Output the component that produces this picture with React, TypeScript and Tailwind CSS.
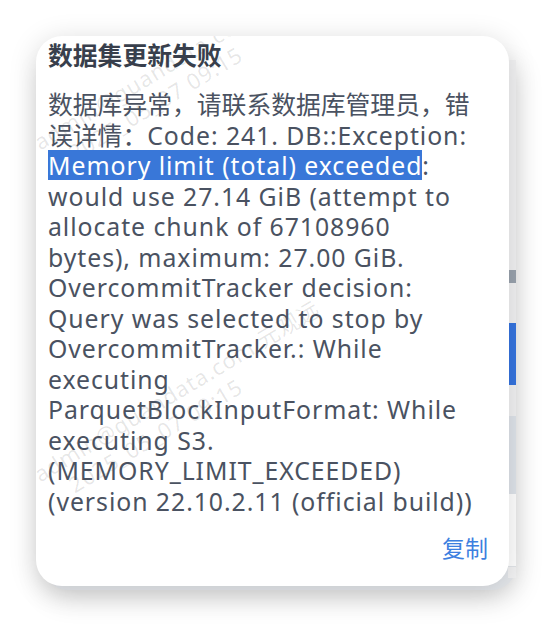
import React from "react";

const font = { fontFamily: '"Noto Sans", "Noto Sans CJK SC", sans-serif' };

function Watermark({ className }: { className: string }) {
  return (
    <div
      className={`pointer-events-none absolute origin-top-left -rotate-[31deg] whitespace-nowrap text-[22px] leading-[27px] tracking-[1px] text-black/[0.1] ${className}`}
    >
      <div>admin@guandata.com 元观远</div>
      <div className="pl-[24px]">2025_05_07 09:15</div>
    </div>
  );
}

function Latin({ children }: { children: React.ReactNode }) {
  return <span className="tracking-[0.95px]">{children}</span>;
}

export default function App() {
  return (
    <div className="relative h-[628px] w-[552px] overflow-hidden bg-white" style={font}>
      {/* page behind the popover */}
      <div className="absolute left-[44px] top-[60px] flex h-[530px] w-[472px] justify-end rounded-b-[24px] bg-[#e4e7eb] shadow-[0_8px_28px_rgba(0,0,0,0.16)]">
        <div className="flex h-[518px] w-[8px] flex-col bg-[#f2f2f3]">
          <div className="h-[210px]" />
          <div className="h-[13px] bg-[#9aa3ae]" />
          <div className="h-[40px]" />
          <div className="h-[62px] bg-[#3574e0]" />
          <div className="h-[31px]" />
          <div className="h-[78px] bg-[#dfe4ea]" />
          <div className="h-[72px] bg-white" />
          <div className="h-px bg-[#e2e5e9]" />
        </div>
      </div>

      {/* popover */}
      <div className="absolute left-[36px] top-[36px] flex h-[550px] w-[473px] flex-col overflow-hidden rounded-[26px] bg-white pl-[12px] pr-[21px] pt-[4px] shadow-[0_4px_28px_rgba(0,0,0,0.15)]">
        <Watermark className="-left-[7px] top-[96px]" />
        <Watermark className="-left-[7px] top-[428px]" />

        <div className="relative text-[24.8px] font-bold leading-[30px] text-[#383f4c]">数据集更新失败</div>
        <div className="relative mt-[19px] text-[24.8px] leading-[30.5px] text-[#4a5261]">
          数据库异常，请联系数据库管理员，错
          <br />
          误详情：<Latin>Code: 241. DB::Exception:</Latin>
          <br />
          <span className="inline-block h-[30px] bg-[#3977d8] leading-[30px] text-white">
            <Latin>Memory limit (total) exceeded</Latin>
          </span>
          <Latin>:</Latin>
          <br />
          <Latin>would use 27.14 GiB (attempt to</Latin>
          <br />
          <Latin>allocate chunk of 67108960</Latin>
          <br />
          <Latin>bytes), maximum: 27.00 GiB.</Latin>
          <br />
          <Latin>OvercommitTracker decision:</Latin>
          <br />
          <Latin>Query was selected to stop by</Latin>
          <br />
          <Latin>OvercommitTracker.: While</Latin>
          <br />
          <Latin>executing</Latin>
          <br />
          <Latin>ParquetBlockInputFormat: While</Latin>
          <br />
          <Latin>executing S3.</Latin>
          <br />
          <Latin>(MEMORY_LIMIT_EXCEEDED)</Latin>
          <br />
          <Latin>(version 22.10.2.11 (official build))</Latin>
        </div>
        <div className="relative mt-[17px] flex justify-end">
          <span className="text-[23px] leading-[30px] text-[#3d7fe0]">复制</span>
        </div>
      </div>
    </div>
  );
}
